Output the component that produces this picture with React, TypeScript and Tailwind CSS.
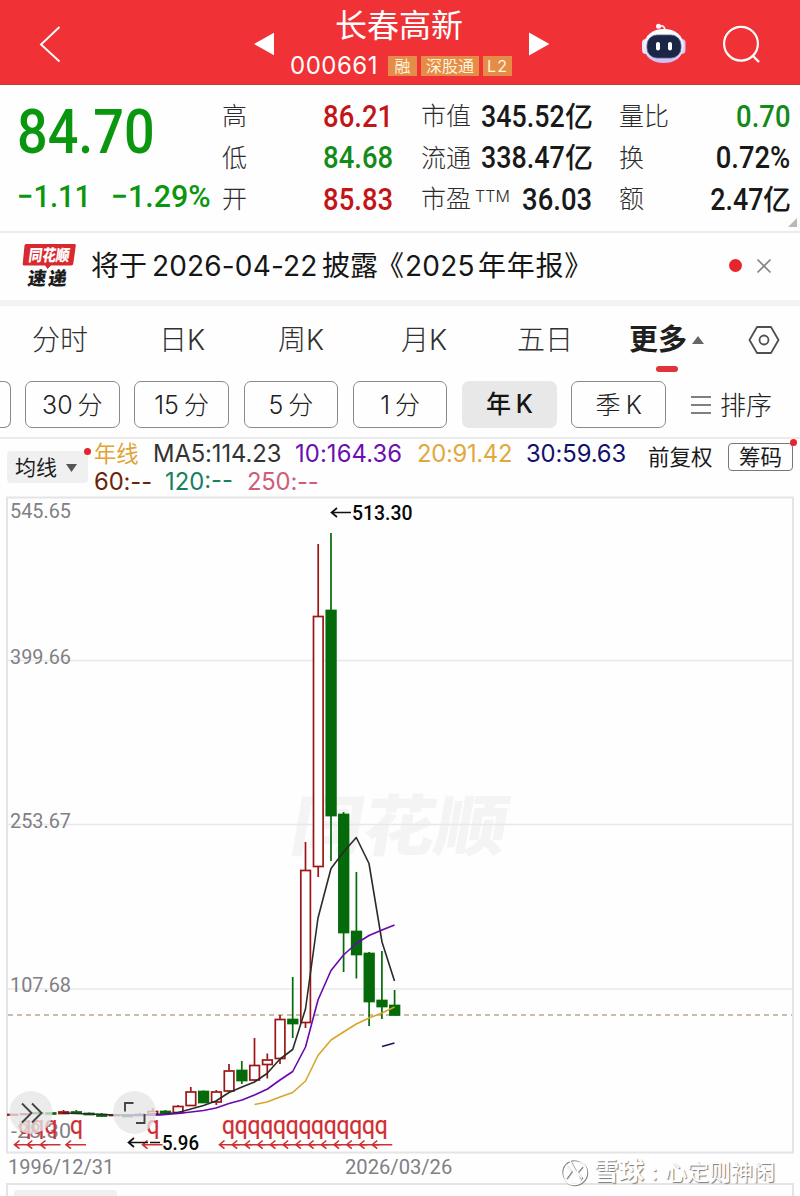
import type { ReactNode } from 'react'

type Candle = [x: number, high: number, top: number, bottom: number, low: number, up: boolean]

const candles: Candle[] = [
  [12.5, 1114, 1114, 1115.5, 1115.5, true],
  [25.3, 1113, 1113.5, 1115, 1115, true],
  [38, 1112, 1112.5, 1114, 1114, false],
  [50.8, 1112.5, 1112.5, 1114.5, 1114.5, false],
  [63.5, 1110, 1111.5, 1114, 1114, true],
  [76.3, 1110, 1111.5, 1113.5, 1114, false],
  [89, 1112.5, 1113, 1115, 1115, false],
  [101.7, 1113, 1114, 1116.5, 1117, false],
  [114.4, 1114, 1114.5, 1116, 1116, true],
  [127.2, 1114, 1115, 1117, 1117, false],
  [139.8, 1113, 1114, 1116, 1116, false],
  [152.7, 1108, 1111, 1114.5, 1115, true],
  [165.4, 1110, 1111, 1113.5, 1114, false],
  [178, 1105, 1106, 1113, 1113, true],
  [190.8, 1087, 1091.5, 1106, 1106, true],
  [203.5, 1090.5, 1091, 1103, 1103, false],
  [216.3, 1090, 1091.5, 1102.5, 1105, true],
  [229, 1064, 1070.5, 1091.5, 1092, true],
  [241.8, 1061, 1070, 1081, 1084, false],
  [254.5, 1038, 1065, 1080.5, 1081, true],
  [267.3, 1053.5, 1059.5, 1065, 1078.5, true],
  [280, 1015, 1019, 1059, 1064, true],
  [292.7, 977, 1019, 1024, 1038, false],
  [305.5, 842, 870, 1023, 1028, true],
  [318.2, 544, 616, 867, 877, true],
  [331, 533, 610, 816, 861, false],
  [343.6, 812, 814, 933, 972, false],
  [356.4, 872, 931, 955, 978.5, false],
  [369.1, 952, 953, 1002, 1026, false],
  [381.9, 951, 1000, 1007, 1019, false],
  [394.6, 990, 1005, 1015.5, 1016, false],
]

const grid = [660.5, 824.5, 989]

const DIN = 'Roboto, "Noto Sans CJK SC", sans-serif'
const UI = 'Inter, "Noto Sans CJK SC", sans-serif'

function Num({ children, unit }: { children: ReactNode; unit?: string }) {
  return (
    <span
      className={
        unit
          ? "inline-block origin-right scale-x-[.865] whitespace-nowrap font-['Roboto'] text-[31px] font-medium"
          : "inline-block origin-right scale-x-[.885] whitespace-nowrap font-['Roboto'] text-[31px] font-medium"
      }
    >
      {children}
    </span>
  )
}

function Stat({ label, sup, unit, value, tone = 'text-[#191919]' }: { label: string; sup?: string; unit?: string; value: string; tone?: string }) {
  return (
    <div className="flex h-[41.5px] items-center justify-between">
      <span className="flex w-0 items-center text-[25px] font-light whitespace-nowrap text-[#2c2c2c]">
        {label}
        {sup && <span className="mb-2 ml-1 text-[16px] tracking-[0.1px]">{sup}</span>}
      </span>
      <span className={`flex items-center whitespace-nowrap ${tone}`}>
        <Num unit={unit}>{value}</Num>
        {unit && <span className="-mr-px text-[28px] font-medium">{unit}</span>}
      </span>
    </div>
  )
}

function Tag({ children, className }: { children: ReactNode; className: string }) {
  return (
    <span className={`flex h-5 items-center justify-center whitespace-nowrap bg-[#e58c48] text-[16px] text-[#fff3dc] ${className}`}>{children}</span>
  )
}

function Robot() {
  return (
    <svg className="h-[42px] w-[46px]" viewBox="0 0 46 42">
      <defs>
        <linearGradient id="shell" x1="0" y1="0" x2="0" y2="1">
          <stop offset="0" stopColor="#ffffff" />
          <stop offset="0.55" stopColor="#f1edfc" />
          <stop offset="1" stopColor="#cbb8f3" />
        </linearGradient>
      </defs>
      <path d="M18 4.500c4-1.500 6 0 6 4.500" fill="none" stroke="#fbeaf1" strokeWidth="1.7" />
      <circle cx="17.500" cy="4.200" r="2.500" fill="#fff" />
      <rect x="1" y="17" width="8" height="15" rx="4" fill="#eae6fb" />
      <rect x="36.500" y="17" width="8" height="15" rx="4" fill="#d6cbf6" />
      <path d="M22.800 7C34 7 42.500 13 42.500 24S34 41 22.800 41 3 35 3 24 12 7 22.800 7Z" fill="url(#shell)" />
      <rect x="6" y="13" width="34" height="23" rx="10" fill="#1b2545" stroke="#56618c" strokeWidth="0.8" />
      <rect x="15" y="20" width="4" height="8.500" rx="2" fill="#fff" />
      <rect x="27" y="20" width="4" height="8.500" rx="2" fill="#fff" />
    </svg>
  )
}

function Header() {
  return (
    <header className="flex h-[85px] items-center border-b border-[#c93a3d] bg-[#f03136] text-white">
      <svg className="ml-[38px] mt-1 h-[38px] w-6" viewBox="0 0 24 38">
        <path d="M21.500 2 3 19.500 21.500 36.500" fill="none" stroke="#fff" strokeWidth="1.9" />
      </svg>
      <svg className="ml-[192px] mt-[3px] h-6 w-5" viewBox="0 0 20 24">
        <path d="M0 12 20.500 0.500v23z" fill="#fff" />
      </svg>
      <div className="ml-4 flex w-[222px] flex-col">
        <div className="ml-[45px] h-12 w-[130px] text-[32px] leading-[51px] whitespace-nowrap">长春高新</div>
        <div className="mt-1 mb-1 flex h-7 items-center gap-1">
          <span className="mr-[5px] w-[89px] whitespace-nowrap text-[24px] leading-7 tracking-[0.5px]">000661</span>
          <Tag className="w-[29px]">融</Tag>
          <Tag className="w-[58px]">深股通</Tag>
          <Tag className="w-[29px] tracking-[1px]">L2</Tag>
        </div>
      </div>
      <svg className="ml-[17px] mt-[3px] h-6 w-5" viewBox="0 0 20 24">
        <path d="M0 0.500 20.500 12 0 23.500z" fill="#fff" />
      </svg>
      <div className="ml-[92px] mt-px">
        <Robot />
      </div>
      <svg className="ml-[35px] mt-[6px] h-10 w-10" viewBox="0 0 40 40">
        <circle cx="19" cy="18.700" r="16.900" fill="none" stroke="#fff" strokeWidth="2.200" />
        <path d="m30.500 30.500 6.500 6.500" stroke="#fff" strokeWidth="2.400" />
      </svg>
    </header>
  )
}

function Quote() {
  return (
    <section className="relative flex h-[146px] pt-[11px]">
      <div className="ml-[17px] w-[205px] text-[#0b960f]">
        <div className="h-[73px] origin-left scale-x-[.885] font-['Roboto'] text-[61px] font-medium leading-[73px]">84.70</div>
        <div className="mt-[10px] flex h-[36px] w-[205px] whitespace-nowrap font-['Roboto'] text-[31px] font-medium leading-[36px]">
          <span className="w-[94px] origin-left scale-x-[.94]">−1.11</span>
          <span className="origin-left scale-x-[.98]">−1.29%</span>
        </div>
      </div>
      <div className="w-[171px]">
        <Stat label="高" value="86.21" tone="text-[#c31518]" />
        <Stat label="低" value="84.68" tone="text-[#148a18]" />
        <Stat label="开" value="85.83" tone="text-[#c31518]" />
      </div>
      <div className="ml-7 w-[171px]">
        <Stat label="市值" value="345.52" unit="亿" />
        <Stat label="流通" value="338.47" unit="亿" />
        <Stat label="市盈" sup="TTM" value="36.03" />
      </div>
      <div className="ml-[27px] w-[171px]">
        <Stat label="量比" value="0.70" tone="text-[#148a18]" />
        <Stat label="换" value="0.72%" />
        <Stat label="额" value="2.47" unit="亿" />
      </div>
      <svg className="absolute right-[3px] bottom-1 h-[9px] w-[9px]" viewBox="0 0 9 9">
        <path d="M9 0v9H0z" fill="#b9b9b9" />
      </svg>
    </section>
  )
}

function News() {
  return (
    <section className="flex h-[69px] items-center border-t-2 border-[#ebebeb] pb-[2px] text-[#161616]">
      <svg className="ml-[22px] h-[46px] w-[56px]" viewBox="0 0 56 46">
        <path d="M4 1h48.500q1.500 0 1.300 1.500l-2.500 18q-.3 2-2 2H29l-3.500 3.500-2.500-3.500H2q-1.500 0-1.300-1.500L2.500 2.500Q2.700 1 4 1Z" fill="#d9292e" />
        <text x="7.500" y="18" textLength="41" lengthAdjust="spacingAndGlyphs" fontFamily={UI} fontSize="16" fontWeight="900" fill="#fff" transform="skewX(-8) translate(1 0)">同花顺</text>
        <text x="8" y="42.500" textLength="39" fontFamily={UI} fontSize="18.500" fontWeight="900" fill="#1d1d1d" transform="skewX(-8) translate(3 0)">速递</text>
      </svg>
      <div className="ml-[13px] flex w-[620px] items-center whitespace-nowrap text-[28px] leading-[40px]">
        <span>将于</span>
        <span className="ml-[5px] w-[168px] tracking-[0.15px]">2026-04-22</span>
        <span className="ml-[2px]">披露</span>
        <span className="-ml-[2px]">《</span>
        <span className="ml-px w-[68px] tracking-[0.2px]">2025</span>
        <span className="ml-[5px] tracking-[0.7px]">年年报》</span>
      </div>
      <span className="ml-[18px] h-[13px] w-[13px] rounded-full bg-[#e5262b]" />
      <svg className="ml-[14px] h-4 w-4" viewBox="0 0 16 16">
        <path d="m1.500 1.500 13 13m0-13-13 13" stroke="#858585" strokeWidth="1.7" />
      </svg>
    </section>
  )
}

function Tabs() {
  return (
    <nav className="box-content flex h-[68px] items-center border-t-[6px] border-[#f3f3f3] text-[28px] font-light text-[#303030]">
      <span className="ml-[32px] w-[127px]">分时</span>
      <span className="w-[119px]">日K</span>
      <span className="w-[123px]">周K</span>
      <span className="w-[116px]">月K</span>
      <span className="w-[112px]">五日</span>
      <span className="relative flex w-[119px] items-center text-[29px] font-bold text-[#1f1f1f]">
        更多
        <svg className="ml-[5px] h-2 w-3" viewBox="0 0 12 8">
          <path d="M6 0 12 8H0z" fill="#666" />
        </svg>
        <i className="absolute top-[48px] left-[27px] h-[6px] w-[22px] rounded-full bg-[#df3439]" />
      </span>
      <svg className="mb-px h-[30px] w-8" viewBox="0 0 32 30">
        <path d="M9 2h14l7.500 13L23 28H9L1.500 15z" fill="none" stroke="#505050" strokeWidth="1.8" strokeLinejoin="round" />
        <circle cx="16" cy="15" r="4.500" fill="none" stroke="#505050" strokeWidth="1.8" />
      </svg>
    </nav>
  )
}

const periods = ['30 分', '15 分', '5 分', '1 分', '年 K', '季 K']

function Periods() {
  return (
    <section className="flex h-[65px] border-b-2 border-[#ebebeb] pt-[7px]">
      <span className="h-[47px] w-[11px] rounded-r-[7px] border border-l-0 border-[#8a8a8a]" />
      <div className="ml-[14px] flex gap-[14.700px] text-[25px] [word-spacing:-2px]">
        {periods.map((p) => (
          <span
            key={p}
            className={
              p === '年 K'
                ? 'flex h-[47px] w-[94.600px] items-center justify-center whitespace-nowrap rounded-[7px] bg-[#e8e8e8] pt-px font-medium text-[#151515]'
                : 'flex h-[47px] w-[94.600px] items-center justify-center whitespace-nowrap rounded-[7px] border border-[#8a8a8a] pt-[2px] font-light text-[#222]'
            }
          >
            {p}
          </span>
        ))}
      </div>
      <svg className="mt-[14px] ml-[25px] h-5 w-5" viewBox="0 0 20 20">
        <path d="M0 2h20M0 10h20M0 18h20" stroke="#555" strokeWidth="1.7" />
      </svg>
      <span className="ml-[9px] text-[26px] leading-[49px] font-light text-[#222]">排序</span>
    </section>
  )
}

function Legend() {
  return (
    <section className="relative flex h-[57px] text-[24px]">
      <div className="mt-[12px] ml-[7px] flex h-[32px] w-[81px] items-center rounded bg-[#f0f0f0] pt-px pl-[8px] text-[21px] text-[#1d1d1d]">
        均线
        <svg className="ml-[9px] h-2 w-[11px]" viewBox="0 0 11 8">
          <path d="M0 0h11L5.500 8z" fill="#555" />
        </svg>
      </div>
      <i className="absolute top-[9px] left-[84px] h-[7px] w-[7px] rounded-full bg-[#e12630]" />
      <div className="mt-px ml-[6px] w-[554px] whitespace-nowrap text-[23.800px] leading-[27.500px]">
        <div className="flex">
          <span className="w-[59px] text-[22.300px] text-[#e0a437]">年线</span>
          <span className="w-[142px] tracking-[-0.1px] text-[#333]">MA5:114.23</span>
          <span className="w-[122px] tracking-[0.1px] text-[#6a0fb0]">10:164.36</span>
          <span className="w-[109px] tracking-[-0.3px] text-[#dfaa3b]">20:91.42</span>
          <span className="tracking-[-0.1px] text-[#11116b]">30:59.63</span>
        </div>
        <div className="flex">
          <span className="w-[71px] tracking-[-0.1px] text-[#6b2408]">60:--</span>
          <span className="w-[82px] text-[#178060]">120:--</span>
          <span className="tracking-[-0.2px] text-[#cf5c78]">250:--</span>
        </div>
      </div>
      <span className="mt-[3px] w-[65px] text-[21.500px] leading-[30px] whitespace-nowrap text-[#1a1a1a]">前复权</span>
      <span className="mt-[4px] ml-[15px] flex h-[28px] w-[65px] items-center justify-center rounded border border-[#777] text-[21.500px] text-[#1a1a1a]">筹码</span>
      <i className="absolute top-0 left-[790px] h-[7px] w-[7px] rounded-full bg-[#e12630]" />
    </section>
  )
}

function BuyMark({ x, inset }: { x: number; inset: number }) {
  return (
    <>
      <text x={x + inset} y="1134" textLength="13" lengthAdjust="spacingAndGlyphs" fontFamily="Roboto, sans-serif" fontSize="25">q</text>
      <path d={`M${x + 5} 1140.500 ${x} 1144.700l5 4M${x} 1144.700h20`} fill="none" stroke="#cf2f31" strokeWidth="1.6" />
    </>
  )
}

function Chart() {
  const late = Array.from({ length: 13 }, (_, i) => 219.5 + i * 12.73)
  return (
    <svg className="block h-[660px] w-[800px]" viewBox="0 496 800 660">
      <text x="288" y="850" textLength="216" lengthAdjust="spacingAndGlyphs" fontFamily={UI} fontSize="66" fontWeight="900" fill="#f4f4f4" transform="translate(150 0) skewX(-10)">同花顺</text>
      <rect x="7" y="497.500" width="786" height="655" fill="none" stroke="#e4e4e6" strokeWidth="2" />
      {grid.map((y) => (
        <path key={y} d={`M8 ${y}H792`} stroke="#e8e8ea" strokeWidth="1.5" />
      ))}
      <path d="M8 1015H792" stroke="#b9a98b" strokeWidth="1.3" strokeDasharray="5 4" />
      <g fontFamily={DIN} fontSize="21" fill="#808085">
        <text x="10" y="518" textLength="61" lengthAdjust="spacingAndGlyphs">545.65</text>
        <text x="10" y="664" textLength="61" lengthAdjust="spacingAndGlyphs">399.66</text>
        <text x="10" y="828" textLength="61" lengthAdjust="spacingAndGlyphs">253.67</text>
        <text x="10" y="992" textLength="61" lengthAdjust="spacingAndGlyphs">107.68</text>
        <text x="11" y="1138" textLength="60" lengthAdjust="spacingAndGlyphs">-28.30</text>
      </g>
      {candles.map(([x, high, top, bottom, low, up]) => {
        const c = up ? '#9d1616' : '#056a09'
        return (
          <g key={x} stroke={c} strokeWidth="1.700">
            <path d={`M${x} ${high}V${top}M${x} ${bottom}V${low}`} />
            <rect x={x - 4.7} y={top + 0.5} width="9.600" height={Math.max(bottom - top - 1, 0.4)} fill={up ? '#fff' : c} />
          </g>
        )
      })}
      <g fill="none" strokeWidth="1.6" strokeLinejoin="round">
        <polyline stroke="#2b2b2b" points="63,1113 89,1114 114,1115 140,1115 165,1114 178,1112.5 191,1109 203.5,1105.5 216,1101 229,1092.5 242,1087 254.5,1082 267,1073.5 280,1059 292.7,1049.5 305.5,1009 318,918 331,868.5 343.5,852 356.3,837.5 369,863.5 382,942 394.5,981" />
        <polyline stroke="#6807ac" points="125,1115.5 160,1115 178,1113.5 191,1112 203.5,1110.5 216,1108 229,1103.5 242,1100 254.5,1095 267.5,1089 280,1080 292.7,1071.5 305.5,1047 318,1000 331,970.5 343.5,955 356.3,943.5 369,935.5 382,930 394.5,925" />
        <polyline stroke="#d8a52c" points="254.5,1104.5 267,1102 280,1097 292.7,1092.5 305.5,1081 318,1055.5 331,1040 343.5,1032 356.3,1024 369,1018 382,1013 394.5,1007" />
        <path stroke="#15155f" d="m382 1046.500 12.500-3.500" />
      </g>
      <g fill="#cf2f31" stroke="#cf2f31" strokeWidth="0.2">
        {[14.5, 27.3, 40.5, 66, 142.5].map((x) => (
          <BuyMark key={x} x={x} inset={4} />
        ))}
        {late.map((x) => (
          <BuyMark key={x} x={x} inset={2.5} />
        ))}
      </g>
      <g fill="#080808" stroke="none" fontFamily={DIN} fontSize="20.500" fontWeight="500">
        <text x="352" y="519.500" textLength="60.500" lengthAdjust="spacingAndGlyphs">513.30</text>
        <text x="162" y="1150" textLength="37" lengthAdjust="spacingAndGlyphs">5.96</text>
      </g>
      <path d="m337 508-5.500 4.500 5.500 4.500M331.500 512.500H351M134 1138l-5.500 4.500 5.500 4.500M128.500 1142.500H148M150 1142.500h10" fill="none" stroke="#111" strokeWidth="1.7" />
      <g fill="#e5e5e5" fillOpacity="0.78">
        <circle cx="31" cy="1112.500" r="21.500" />
        <circle cx="134.500" cy="1112.500" r="21.500" />
      </g>
      <path d="m22 1103.500 9.500 9.500-9.500 9.500M32 1103.500l9.500 9.500-9.500 9.500M125 1111.500v-8.500h8.500M136 1123h8.500v-9" fill="none" stroke="#444" strokeWidth="1.9" />
    </svg>
  )
}

function Footer() {
  return (
    <section className="relative h-[41px] overflow-hidden">
      <div className="flex h-[27px] items-center pl-2 font-['Roboto'] text-[21px] leading-[22px] text-[#808085]">
        <span className="w-[337px] origin-left scale-x-[.95] pb-[5px]">1996/12/31</span>
        <span className="-ml-4 origin-left translate-x-4 scale-x-[.96] pb-[5px]">2026/03/26</span>
      </div>
      <div className="mx-[6px] h-[20px] border-2 border-b-0 border-[#e4e4e6] pt-[5px] pl-[6px]">
        <div className="h-[20px] w-[103px] rounded bg-[#f0f0f0]" />
      </div>
      <div className="absolute top-0 left-[560px] flex h-[32px] items-center whitespace-nowrap text-[22px] text-white [text-shadow:1px_1px_1px_#777]">
        <svg className="h-[29px] w-[29px]" viewBox="0 0 29 29" fill="none">
          <g stroke="#888" transform="translate(1 1)">
            <circle cx="14" cy="14" r="12.500" strokeWidth="1.5" />
            <path d="m6 7 5 6-5 7M10 3l11 20M22 8l-5 6 5 6" strokeWidth="1.7" />
          </g>
          <g stroke="#fff">
            <circle cx="14" cy="14" r="12.500" strokeWidth="1.500" />
            <path d="m6 7 5 6-5 7M10 3l11 20M22 8l-5 6 5 6" strokeWidth="1.5" />
          </g>
        </svg>
        <span className="ml-[5px] text-[25px] font-bold">雪球</span>
        <span className="w-[21px] text-center">:</span>
        <span>心定则神闲</span>
      </div>
    </section>
  )
}

export default function App() {
  return (
    <main className="h-[1196px] w-[800px] overflow-hidden bg-[#fefefe] font-['Inter','Noto_Sans_CJK_SC',sans-serif]">
      <Header />
      <Quote />
      <News />
      <Tabs />
      <Periods />
      <Legend />
      <Chart />
      <Footer />
    </main>
  )
}
